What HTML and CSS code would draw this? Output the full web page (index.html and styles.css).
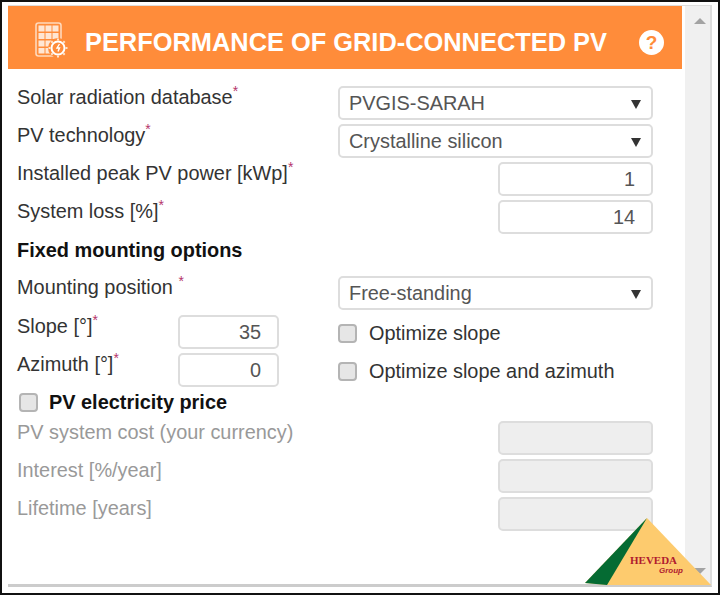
FILE: index.html
```html
<!DOCTYPE html>
<html lang="en">
<head>
  <meta charset="UTF-8" />
  <title>Performance of grid-connected PV</title>
  <link rel="stylesheet" href="styles.css">
</head>
<body>
  <div class="frame">
    <div class="panel">
      <div class="main">
        <div class="header">
          <svg class="header-icon" width="36" height="36" viewBox="0 0 36 36" fill="none">
            <rect x="2" y="1" width="25" height="33" rx="2.500" stroke="#ffd9bc" stroke-width="1.600"/>
            <path d="M4.500 3.500h6v6h-6zM11.500 3.500h6v6h-6zM18.500 3.500h6v6h-6zM4.500 11h6v6h-6zM11.500 11h6v6h-6zM18.500 11h6v6h-6zM4.500 18.500h6v6h-6zM11.500 18.500h6v6h-6zM18.500 18.500h6v6h-6zM4.500 26h6v5.500h-6zM11.500 26h6v5.500h-6z" fill="#ffe6d3"/>
            <circle cx="24" cy="26" r="10" fill="#ff8c3a"/>
            <circle cx="24" cy="26" r="6.500" stroke="#fff" stroke-width="2"/>
            <path d="M24 16.500v2M24 33.500v2M14.500 26h2M31.500 26h2M17.300 19.300l1.400 1.400M29.300 31.300l1.400 1.400M17.300 32.700l1.400-1.400M29.300 20.700l1.400-1.400" stroke="#ffe3cc" stroke-width="2"/>
            <path d="M25.500 22l-2.500 4h2.500l-1.500 3.500" stroke="#fff" stroke-width="1.400"/>
          </svg>
          <h1 class="header-title">PERFORMANCE OF GRID-CONNECTED PV</h1>
          <span class="help">?</span>
        </div>

        <div class="form">
          <div class="row">
            <label>Solar radiation database<sup>*</sup></label>
            <div class="select">PVGIS-SARAH<span class="caret"></span></div>
          </div>
          <div class="row">
            <label>PV technology<sup>*</sup></label>
            <div class="select">Crystalline silicon<span class="caret"></span></div>
          </div>
          <div class="row">
            <label>Installed peak PV power [kWp]<sup>*</sup></label>
            <div class="input">1</div>
          </div>
          <div class="row">
            <label>System loss [%]<sup>*</sup></label>
            <div class="input">14</div>
          </div>

          <div class="section-title">Fixed mounting options</div>

          <div class="row">
            <label>Mounting position <sup>*</sup></label>
            <div class="select">Free-standing<span class="caret"></span></div>
          </div>

          <div class="mount">
            <div class="mount-row">
              <label>Slope [°]<sup>*</sup></label>
              <div class="input small">35</div>
              <div class="check-line"><span class="check"></span>Optimize slope</div>
            </div>
            <div class="mount-row">
              <label>Azimuth [°]<sup>*</sup></label>
              <div class="input small">0</div>
              <div class="check-line"><span class="check"></span>Optimize slope and azimuth</div>
            </div>
          </div>

          <div class="price-title"><span class="check"></span>PV electricity price</div>

          <div class="row muted">
            <label>PV system cost (your currency)</label>
            <div class="input off"></div>
          </div>
          <div class="row muted">
            <label>Interest [%/year]</label>
            <div class="input off"></div>
          </div>
          <div class="row muted">
            <label>Lifetime [years]</label>
            <div class="input off"></div>
          </div>
        </div>
      </div>

      <div class="scrollbar">
        <span class="arrow-up"></span>
        <span class="arrow-down"></span>
      </div>
    </div>

    <div class="logo">
      <svg width="128" height="68" viewBox="0 0 128 68">
        <polygon points="0,65 62,0 126,67 21,67" fill="#fdcb6e"/>
        <polygon points="0,65 62,0 22,67" fill="#056b33"/>
      </svg>
      <div class="logo-name">HEVEDA</div>
      <div class="logo-group">Group</div>
    </div>
  </div>
</body>
</html>
```

FILE: styles.css
```css
* { box-sizing: border-box; margin: 0; padding: 0; }
html, body { width: 720px; height: 595px; overflow: hidden; background: #fff; }
body { font-family: 'Liberation Sans', Arial, sans-serif; font-size: 19.9px; color: #333; }

.frame {
  position: relative; width: 720px; height: 595px;
  border: 2px solid #111;
  padding: 3px 6px 6px 6px;
}
.panel {
  display: flex; height: 100%;
  border-top: 1px solid #ddd; border-right: 2px solid #ddd; border-bottom: 3px solid #ccc;
}
.main { width: 674px; flex: none; }

/* Header */
.header {
  display: flex; align-items: center; height: 63px;
  background: #ff8c3a; padding: 10px 18px 0 26px; color: #fff;
}
.header-icon { flex: none; margin-right: 15px; margin-bottom: 5px; }
.header-title { flex: 1; font-size: 25.4px; font-weight: bold; white-space: nowrap; }
.help {
  display: flex; align-items: center; justify-content: center;
  width: 25px; height: 25px; border-radius: 50%;
  background: #fff; color: #ff8c3a; font-size: 19px; font-weight: bold;
}

/* Form */
.form { padding: 17px 29px 0 9px; }
.row {
  display: flex; justify-content: space-between; align-items: flex-start;
  height: 34px; margin-bottom: 4px;
}
label { line-height: 22px; white-space: nowrap; }
sup { color: #b5346b; font-size: 14px; line-height: 0; }

.select, .input {
  height: 34px; border: 2px solid #ddd; border-radius: 5px; background: #fff;
  line-height: 30px; color: #555;
}
.select { position: relative; width: 315px; padding-left: 9px; }
.caret {
  position: absolute; right: 10px; top: 12px;
  border-left: 5px solid transparent; border-right: 5px solid transparent;
  border-top: 9px solid #333;
}
.input { width: 155px; padding-right: 16px; text-align: right; }
.input.small { width: 101px; padding-right: 16px; }
.input.off { background: #eee; }

.section-title { font-weight: bold; color: #111; line-height: 22px; margin: 5px 0 15px; }

.mount { display: flex; flex-direction: column; gap: 4px; margin-top: 5px; }
.mount-row { display: grid; grid-template-columns: 161px 101px auto; height: 34px; }
.check-line { display: flex; align-items: center; margin-left: 59px; padding-top: 2px; color: #333; }
.check {
  flex: none; width: 19px; height: 19px; margin-right: 12px;
  border: 2px solid #b4b4b4; border-radius: 4px; background: #e6e6e6;
}
.price-title {
  display: flex; align-items: center; height: 22px; margin: 4px 0 8px 2px;
  font-weight: bold; color: #111;
}
.price-title .check { margin-right: 11px; }
.muted label { color: #999; }

/* Scrollbar */
.scrollbar {
  position: relative; flex: 1; margin-left: 3px; background: #f0f0f0;
}
.arrow-up, .arrow-down {
  position: absolute; left: 9px;
  border-left: 6px solid transparent; border-right: 6px solid transparent;
}
.arrow-up { top: 12px; border-bottom: 6px solid #a3a3a3; }
.arrow-down { bottom: 10px; border-top: 6px solid #a3a3a3; }

/* Logo */
.logo { position: absolute; left: 583px; top: 516px; width: 128px; height: 68px; }
.logo svg { display: block; }
.logo-name {
  position: absolute; left: 45px; top: 36px;
  font-family: 'Liberation Serif', serif; font-size: 11px; line-height: 12px; font-weight: bold; color: #b01a2e;
}
.logo-group {
  position: absolute; left: 74px; top: 48px;
  font-size: 8px; line-height: 10px; font-weight: bold; font-style: italic; color: #b01a2e;
}
```
